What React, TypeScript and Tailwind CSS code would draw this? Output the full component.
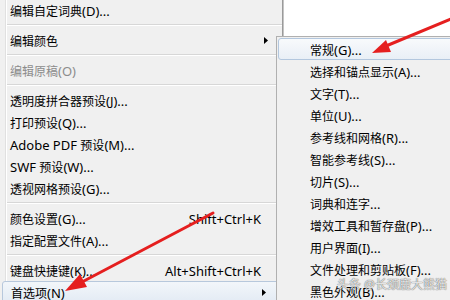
import React from "react";

type Item =
  | { sep: true }
  | { t: string; sc?: string; arrow?: boolean; disabled?: boolean; hl?: boolean };

const leftItems: Item[] = [
  { t: "编辑自定词典(D)..." },
  { sep: true },
  { t: "编辑颜色", arrow: true },
  { sep: true },
  { t: "编辑原稿(O)", disabled: true },
  { sep: true },
  { t: "透明度拼合器预设(J)..." },
  { t: "打印预设(Q)..." },
  { t: "Adobe PDF 预设(M)..." },
  { t: "SWF 预设(W)..." },
  { t: "透视网格预设(G)..." },
  { sep: true },
  { t: "颜色设置(G)...", sc: "Shift+Ctrl+K" },
  { t: "指定配置文件(A)..." },
  { sep: true },
  { t: "键盘快捷键(K)...", sc: "Alt+Shift+Ctrl+K" },
  { t: "首选项(N)", arrow: true, hl: true },
];

const subItems = [
  "常规(G)...",
  "选择和锚点显示(A)...",
  "文字(T)...",
  "单位(U)...",
  "参考线和网格(R)...",
  "智能参考线(S)...",
  "切片(S)...",
  "词典和连字...",
  "增效工具和暂存盘(P)...",
  "用户界面(I)...",
  "文件处理和剪贴板(F)...",
  "黑色外观(B)...",
];

function Label({ text }: { text: string }) {
  const parts = text.split(/([\u3000-\u9fff\uff00-\uffef]+)/).filter((p) => p.length > 0);
  return (
    <span className="whitespace-pre">
      {parts.map((p, i) =>
        /[\u3000-\u9fff\uff00-\uffef]/.test(p) ? (
          <span key={i} className="text-[12px] font-['Noto_Sans_CJK_SC',sans-serif]">
            {p}
          </span>
        ) : (
          <span key={i} className="text-[13px] font-['Noto_Sans','Noto_Sans_CJK_SC',sans-serif]">
            {p}
          </span>
        )
      )}
    </span>
  );
}

function Tri() {
  return (
    <svg width="4" height="7" viewBox="0 0 4 7" className="block">
      <polygon points="0,0 4,3.5 0,7" fill="#000" />
    </svg>
  );
}

export default function App() {
  return (
    <div className="relative w-[450px] h-[300px] overflow-hidden bg-white flex leading-none">
      {/* left menu */}
      <div className="relative w-[283px] h-[300px] shrink-0 bg-[#f0f0f0] border-r border-[#9a9a9a] shadow-[1px_0_0_#c4c4c4]">
        <div className="absolute left-[5px] top-0 bottom-0 w-px bg-[#e0e0e0] shadow-[1px_0_0_#ffffff]" />
        <div className="flex flex-col -mt-px">
          {leftItems.map((it, i) =>
            "sep" in it ? (
              <div key={i} className="h-[8px] flex flex-col justify-center pl-[6px]">
                <div className="h-px bg-[#d7d7d7]" />
                <div className="h-px bg-white" />
              </div>
            ) : (
              <div
                key={i}
                className={
                  it.hl
                    ? "relative h-[22px] mx-[2px] flex items-center pl-[8px] pr-[12px] rounded-[3px] border border-[#b7c8dc] bg-gradient-to-b from-[#f2f6fa] to-[#e3ebf4] -mx-px"
                    : "relative h-[22px] mx-[2px] flex items-center pl-[8px] pr-[19px]"
                }
              >
                <span className={it.disabled ? "text-[#8c8c8c]" : "text-black"}>
                  <Label text={it.t} />
                </span>
                {it.sc && (
                  <span className="ml-auto text-black">
                    <Label text={it.sc} />
                  </span>
                )}
                {it.arrow && (
                  <span className={it.hl ? "ml-auto mr-[1px]" : "ml-auto mr-[-7px]"}>
                    <Tri />
                  </span>
                )}
              </div>
            )
          )}
        </div>
      </div>

      {/* submenu */}
      <div className="relative -ml-[7px] mt-[36px] flex-1 min-w-[180px] h-[270px] bg-[#f0f0f0] border-l border-t border-[#b0b0b0] pl-px pt-px">
        <div className="flex flex-col">
          {subItems.map((s, i) => (
            <div
              key={i}
              className={
                i === 0
                  ? "h-[22px] flex items-center pl-[31px] rounded-[3px] border border-[#b3c7de] bg-gradient-to-b from-[#f8fafc] to-[#e9eff6] -mr-[4px]"
                  : "h-[22px] flex items-center pl-[32px]"
              }
            >
              <span className="text-black">
                <Label text={s} />
              </span>
            </div>
          ))}
        </div>
      </div>

      {/* watermark */}
      <div className="absolute left-[337px] top-[279px] text-[12px] font-['Noto_Sans','Noto_Sans_CJK_SC',sans-serif] text-[rgba(255,255,255,0.85)] [text-shadow:0_0_1px_rgba(0,0,0,0.55),0_0_1px_rgba(0,0,0,0.45)] whitespace-pre">
        头条 @长颈鹿大熊猫
      </div>

      {/* red arrows */}
      <svg className="absolute inset-0 pointer-events-none" width="450" height="300" viewBox="0 0 450 300">
        <line x1="456" y1="17" x2="386" y2="46" stroke="#e51f1f" strokeWidth="3" strokeLinecap="round" />
        <polygon points="372,53 391,52 386,40" fill="#e51f1f" />
        <line x1="213" y1="213" x2="82" y2="282" stroke="#e51f1f" strokeWidth="3" strokeLinecap="round" />
        <polygon points="65,291 87,287 80,274" fill="#e51f1f" />
      </svg>
    </div>
  );
}
